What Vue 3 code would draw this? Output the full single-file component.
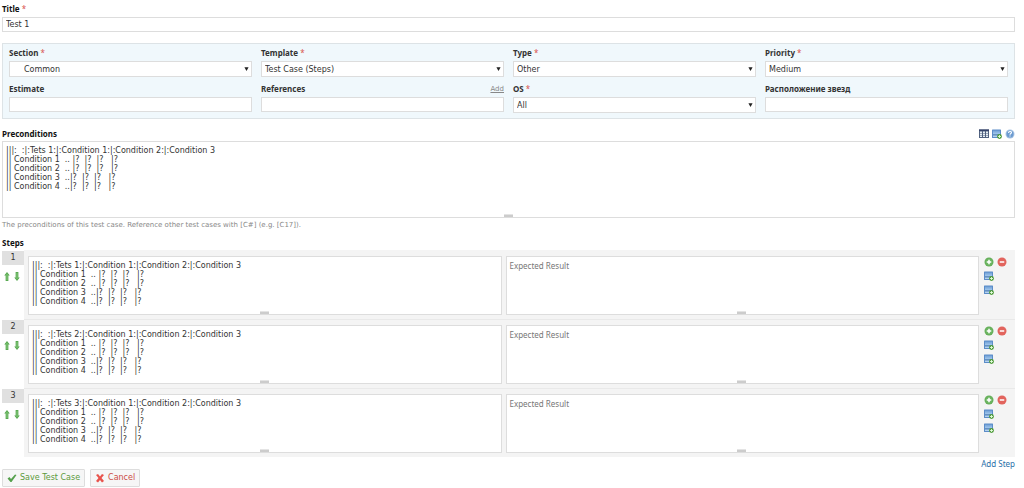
<script setup>
import { ref } from 'vue'

const table = (n) =>
  [
    `|||:  :|:Tets ${n}:|:Condition 1:|:Condition 2:|:Condition 3`,
    '|| Condition 1  .. |?  |?  |?   |?',
    '|| Condition 2  .. |?  |?  |?   |?',
    '|| Condition 3  ..|?  |?  |?   |?',
    '|| Condition 4  ..|?  |?  |?   |?',
  ].join('\n')

const title = ref('Test 1')
const preconditions = ref(table(1))
const fields = [
  { id: 'section', label: 'Section', required: true, value: 'Common', indent: true },
  { id: 'template', label: 'Template', required: true, value: 'Test Case (Steps)' },
  { id: 'type', label: 'Type', required: true, value: 'Other' },
  { id: 'priority', label: 'Priority', required: true, value: 'Medium' },
  { id: 'estimate', label: 'Estimate' },
  { id: 'references', label: 'References', link: 'Add' },
  { id: 'os', label: 'OS', required: true, value: 'All' },
  { id: 'stars', label: 'Расположение звезд' },
]
const steps = ref([1, 2, 3].map((n) => ({ text: table(n), expected: '' })))
</script>

<template>
  <form class="page" @submit.prevent>
    <svg class="defs" aria-hidden="true">
      <defs>
        <linearGradient id="blue" x1="0" y1="0" x2="0" y2="1">
          <stop offset="0" stop-color="#6f9fd6" /><stop offset="1" stop-color="#a9cdef" />
        </linearGradient>
        <radialGradient id="green"><stop offset="0" stop-color="#7cc076" /><stop offset="1" stop-color="#62ad55" /></radialGradient>
        <symbol id="picture" viewBox="0 0 20 20">
          <rect x="0" y="1" width="18" height="17" rx="1" fill="#5b8cc8" />
          <rect x="2" y="3" width="14" height="8" fill="url(#blue)" />
          <rect x="2" y="11" width="14" height="2" fill="#4777ac" />
          <rect x="2" y="13" width="14" height="3" fill="#b5d2ec" />
          <circle cx="15" cy="15" r="4.8" fill="#4f9b3b" />
          <path d="M15 12v6M12 15h6" stroke="#e9ffe1" stroke-width="1.7" />
        </symbol>
      </defs>
    </svg>

    <label class="label" for="title">Title <i>*</i></label>
    <input id="title" v-model="title" class="box" type="text" />

    <section class="panel">
      <div v-for="f in fields" :key="f.id" class="field">
        <div class="head">
          <label class="label" :for="f.id">{{ f.label }} <i v-if="f.required">*</i></label>
          <a v-if="f.link" href="#" class="add">{{ f.link }}</a>
        </div>
        <div v-if="f.value" class="pick">
          <select :id="f.id" class="box" :class="{ indent: f.indent }">
            <option>{{ f.value }}</option>
          </select>
          <svg class="arrow" viewBox="0 0 6 6" aria-hidden="true"><path d="M.5 1h5L3 5.500z" fill="#222" /></svg>
        </div>
        <input v-else :id="f.id" class="box" type="text" />
      </div>
    </section>

    <div class="head preHead">
      <label class="label" for="pre">Preconditions</label>
      <div class="tools">
        <button type="button" aria-label="Insert table">
          <svg viewBox="0 0 20 20">
            <rect x="0" y="1" width="20" height="17" fill="#50617f" />
            <rect x="0" y="1" width="20" height="3" fill="#34436a" />
            <path d="M2 5h4v3H2zM8 5h4v3H8zM14 5h4v3h-4zM2 9h4v3H2zM8 9h4v3H8zM14 9h4v3h-4zM2 13h4v3H2zM8 13h4v3H8zM14 13h4v3h-4z" fill="#e7f0f5" />
          </svg>
        </button>
        <button type="button" aria-label="Insert image"><svg><use href="#picture" /></svg></button>
        <button type="button" aria-label="Help">
          <svg viewBox="0 0 20 20">
            <circle cx="10" cy="10" r="9" fill="#a9c5e4" />
            <circle cx="10" cy="10" r="7" fill="#6c9bd0" />
            <path d="M7 8c0-4 6-4 6-1 0 2-3 2-3 4.500M10 13v2" fill="none" stroke="#fff" stroke-width="2.200" />
          </svg>
        </button>
      </div>
    </div>
    <div class="area preArea">
      <textarea id="pre" v-model="preconditions" class="box"></textarea>
      <span class="grip"></span>
    </div>
    <p class="hint">The preconditions of this test case. Reference other test cases with [C#] (e.g. [C17]).</p>

    <h2 class="label stepsTitle">Steps</h2>
    <ol class="steps">
      <li v-for="(s, n) in steps" :key="n" class="step">
        <div class="side">
          <span class="num">{{ n + 1 }}</span>
          <div class="moves">
            <button type="button" aria-label="Move up">
              <svg viewBox="0 0 8 12"><path d="M4 1 7 5H5.500v6h-3V5H1z" fill="#55a84e" /><path d="M4 3v7" stroke="#91cd86" /></svg>
            </button>
            <button type="button" aria-label="Move down">
              <svg viewBox="0 0 8 12"><path d="M4 11 7 7H5.500V1h-3v6H1z" fill="#55a84e" /><path d="M4 2v7" stroke="#91cd86" /></svg>
            </button>
          </div>
        </div>
        <div class="body">
          <div class="area">
            <textarea v-model="s.text" class="box" aria-label="Step description"></textarea>
            <span class="grip"></span>
          </div>
          <div class="area">
            <textarea v-model="s.expected" class="box" aria-label="Expected result" placeholder="Expected Result"></textarea>
            <span class="grip"></span>
          </div>
          <div class="actions">
            <button type="button" aria-label="Add step below">
              <svg viewBox="0 0 20 20"><circle cx="10" cy="10" r="9" fill="url(#green)" /><path d="M10 5.500v9M5.500 10h9" stroke="#fff" stroke-width="3" /></svg>
            </button>
            <button type="button" aria-label="Delete step">
              <svg viewBox="0 0 20 20"><circle cx="10" cy="10" r="9" fill="#e2645d" /><path d="M5.500 10h9" stroke="#fff" stroke-width="3" /></svg>
            </button>
            <button type="button" class="first" aria-label="Insert image in step"><svg><use href="#picture" /></svg></button>
            <button type="button" class="first" aria-label="Insert image in expected result"><svg><use href="#picture" /></svg></button>
          </div>
        </div>
      </li>
    </ol>

    <div class="more"><a href="#">Add Step</a></div>
    <div class="buttons">
      <button type="submit" class="btn save">
        <svg viewBox="0 0 20 20"><path d="M1 11l4-3 3 4L16 3l3 1L9 18H7z" fill="#55a04c" /></svg>Save Test Case
      </button>
      <button type="button" class="btn cancel">
        <svg viewBox="0 0 20 20"><path d="M2 4l4-2 4 5 4-5 4 2-5 6 5 6-4 3-4-5-4 5-4-3 5-6z" fill="#e8534c" /></svg>Cancel
      </button>
    </div>
  </form>
</template>

<style>
body {
  background: #fff;
}
</style>

<style scoped>
.page {
  padding: 4px 9px 2px 2px;
  font: 8px/10px "DejaVu Sans", sans-serif;
  color: #333;
}
.page * {
  box-sizing: border-box;
}
.defs {
  position: absolute;
  width: 0;
  height: 0;
}
.label {
  display: block;
  margin: 0;
  font: 700 8px/10px "Noto Sans", sans-serif;
  color: #111;
}
.label i {
  font-style: normal;
  font-weight: 400;
  color: #d9534f;
}
.box {
  display: block;
  width: 100%;
  height: 15px;
  margin: 0;
  padding: 0 3px;
  border: 1px solid #ddd;
  border-radius: 0;
  outline: 0;
  background: #fff;
  color: #333;
  font: inherit;
}
#title {
  margin-top: 3px;
}
.panel {
  display: grid;
  grid-template-columns: repeat(4, minmax(0, 1fr));
  gap: 7px 9px;
  margin-top: 11px;
  padding: 4px 6px 5px;
  border: 1px solid #dde3e6;
  background: #f0f8fc;
}
.panel .label {
  color: #333;
}
.head {
  display: flex;
  justify-content: space-between;
  align-items: center;
  margin-bottom: 3px;
}
.add {
  font-size: 7px;
  color: #888;
}
.pick {
  position: relative;
}
select.box {
  height: 16px;
  padding-top: 1px;
  appearance: none;
}
select.indent {
  padding-left: 14px;
}
.arrow {
  position: absolute;
  right: 3px;
  top: 5px;
  width: 5px;
  height: 6px;
  pointer-events: none;
}
.preHead {
  margin: 10px 0 2px;
}
button {
  padding: 0;
  border: 0;
  background: none;
  font: inherit;
  cursor: pointer;
}
button svg {
  display: block;
  width: 10px;
  height: 10px;
}
.tools {
  display: flex;
  gap: 3px;
}
.area {
  position: relative;
  height: 59px;
}
.preArea {
  height: 77px;
}
.area .box {
  height: 100%;
  padding: 4px 3px;
  line-height: 9px;
  resize: none;
  overflow: hidden;
}
.box::placeholder {
  font-family: "Noto Sans", sans-serif;
  color: #777;
  opacity: 1;
}
.grip {
  position: absolute;
  bottom: 1px;
  left: calc(50% - 5px);
  width: 9px;
  height: 3px;
  border-top: 1px solid #e4e4e4;
  background: #ccc;
}
.hint {
  margin: 2px 0 8px;
  font-size: 7px;
  color: #888;
}
.stepsTitle {
  margin-bottom: 2px;
}
.steps {
  margin: 0;
  padding: 0;
  list-style: none;
}
.step {
  display: flex;
}
.side {
  width: 22px;
  padding-top: 1px;
}
.num {
  display: block;
  line-height: 14px;
  text-align: center;
  background: #e0e0e0;
}
.moves {
  display: flex;
  gap: 2px;
  padding: 6px 0 0 1px;
}
.moves svg {
  width: 8px;
  height: 11px;
}
.body {
  flex: 1;
  display: grid;
  grid-template-columns: minmax(0, 1fr) minmax(0, 1fr) 26px;
  gap: 4px;
  padding: 6px 6px 4px 4px;
  background: #f4f4f4;
}
.step + .step .body {
  box-shadow: inset 0 1px #e9e9e9;
}
.actions {
  display: grid;
  grid-template-columns: 10px 10px;
  align-content: start;
  gap: 4px 3px;
  padding: 1px 0 0 1px;
}
.actions .first {
  grid-column: 1;
}
.more {
  margin-top: 2px;
  text-align: right;
  font-family: "Noto Sans", sans-serif;
}
.more a {
  color: #2a6fa8;
  text-decoration: none;
}
.buttons {
  display: flex;
  gap: 5px;
}
.btn {
  display: flex;
  align-items: center;
  gap: 3px;
  height: 18px;
  padding: 0 4px;
  border: 1px solid #ddd;
  border-radius: 1px;
  background: #f6f6f6;
}
.save {
  color: #5c9a3c;
}
.cancel {
  color: #cb4b45;
}
</style>
